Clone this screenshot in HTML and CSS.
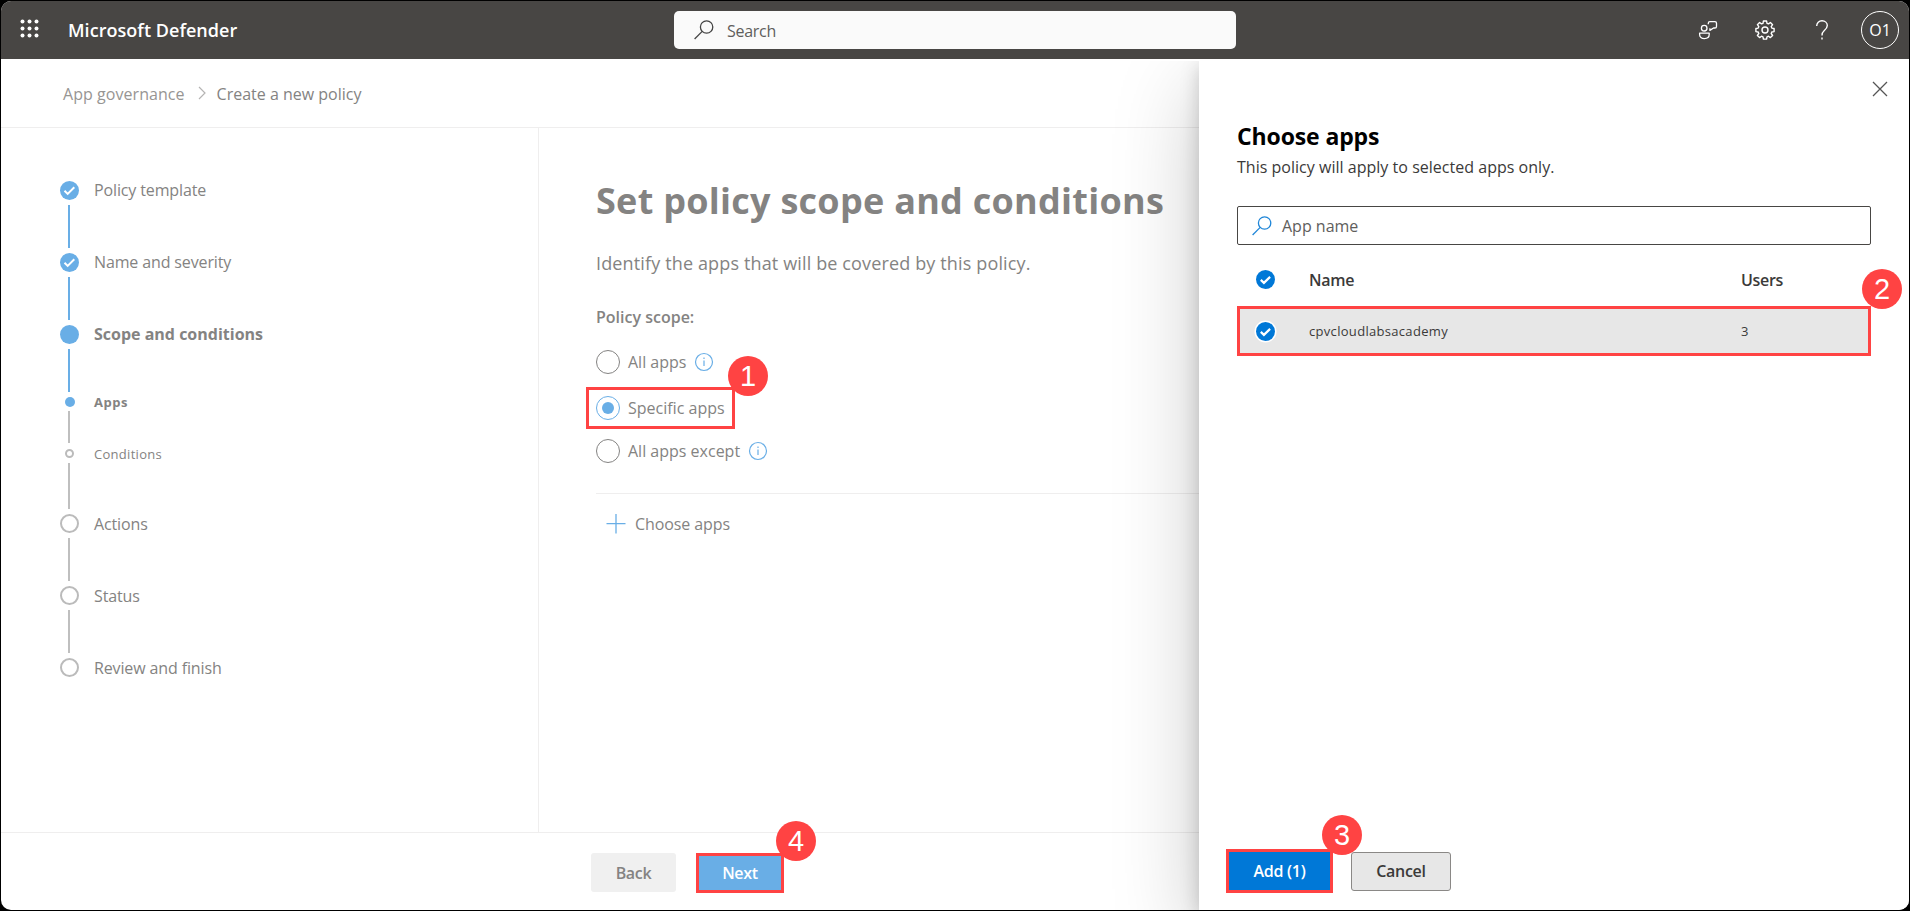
FILE: index.html
```html
<!DOCTYPE html>
<html lang="en">
<head>
<meta charset="utf-8">
<title>Create a new policy - Microsoft Defender</title>
<link rel="stylesheet" href="styles.css">
</head>
<body>
<div class="window">
  <header class="topbar">
    <svg class="waffle" width="20" height="20" viewBox="0 0 20 20" fill="#fff"><circle cx="2.5" cy="2.5" r="2"/><circle cx="9.5" cy="2.5" r="2"/><circle cx="16.5" cy="2.5" r="2"/><circle cx="2.5" cy="9.5" r="2"/><circle cx="9.5" cy="9.5" r="2"/><circle cx="16.5" cy="9.5" r="2"/><circle cx="2.5" cy="16.5" r="2"/><circle cx="9.5" cy="16.5" r="2"/><circle cx="16.5" cy="16.5" r="2"/></svg>
    <span class="brand">Microsoft Defender</span>
    <div class="search">
      <svg width="20" height="20" viewBox="0 0 20 20" fill="none" stroke="#444" stroke-width="1.3"><circle cx="12.6" cy="7" r="6.2"/><path d="M8.2 11.4L.6 19"/></svg>
      <span>Search</span>
    </div>
    <div class="tools">
      <svg class="feedback" width="20" height="20" viewBox="0 0 20 20" fill="none" stroke="#fff" stroke-width="1.3" stroke-linejoin="round"><circle cx="6.2" cy="8.2" r="2.8"/><path d="M1.6 13.2h9.6v1.400c0 2.600-2 4-4.800 4s-4.800-1.400-4.800-4z"/><path d="M10.300 4.200V3.200c0-1 .6-1.600 1.600-1.600h5c1 0 1.600.6 1.600 1.600v3.200c0 1-.6 1.600-1.600 1.600h-1.400l-3.600 2.400V8.200"/></svg>
      <svg class="gear" width="20" height="20" viewBox="0 0 20 20" fill="none" stroke="#fff" stroke-width="1.4" stroke-linejoin="round"><circle cx="10" cy="10" r="3"/><path d="M8.4 1h3.2l.4 2.3 1.5.6 1.9-1.4 2.2 2.2-1.4 1.9.6 1.5 2.3.4v3.1l-2.3.4-.6 1.5 1.4 1.9-2.2 2.2-1.9-1.4-1.5.6-.4 2.3H8.4l-.4-2.3-1.5-.6-1.9 1.4-2.2-2.2 1.4-1.9-.6-1.5L.9 11.6V8.5l2.3-.4.6-1.5-1.4-1.9 2.2-2.2 1.9 1.4L8 3.3z"/></svg>
      <svg class="help" width="14" height="20" viewBox="0 0 14 20" fill="none" stroke="#fff" stroke-width="1.4"><path d="M1.7 6C1.7 2.8 4 .8 7 .8s5.3 2 5.3 4.8c0 2.6-1.5 3.7-3.2 5.1C7.7 11.9 7 12.8 7 15.4M7 17.4v2"/></svg>
      <span class="avatar">O1</span>
    </div>
  </header>
  <div class="page">
    <nav class="crumbs"><span class="parent">App governance</span><svg width="8" height="14" viewBox="0 0 8 14" fill="none" stroke="#b5b4b3" stroke-width="1.2"><path d="M1 1l6 6-6 6"/></svg><span>Create a new policy</span></nav>
    <div class="wizard">
      <aside class="steps">
        <div class="step"><i class="dot full"><svg width="19" height="19" viewBox="0 0 19 19" fill="none" stroke="#fff" stroke-width="2"><path d="M4.5 9.7l3.2 3.2 6.6-6.6"/></svg></i><span>Policy template</span></div>
        <div class="line blue"></div>
        <div class="step"><i class="dot full"><svg width="19" height="19" viewBox="0 0 19 19" fill="none" stroke="#fff" stroke-width="2"><path d="M4.5 9.7l3.2 3.2 6.6-6.6"/></svg></i><span>Name and severity</span></div>
        <div class="line blue"></div>
        <div class="step current"><i class="dot full"></i><span>Scope and conditions</span></div>
        <div class="line blue"></div>
        <div class="step sub apps"><i class="dot full"></i><span>Apps</span></div>
        <div class="line after-apps"></div>
        <div class="step sub conditions"><i class="dot"></i><span>Conditions</span></div>
        <div class="line after-conditions"></div>
        <div class="step later"><i class="dot"></i><span>Actions</span></div>
        <div class="line"></div>
        <div class="step later"><i class="dot"></i><span>Status</span></div>
        <div class="line"></div>
        <div class="step later"><i class="dot"></i><span>Review and finish</span></div>
      </aside>
      <main class="content">
        <h1>Set policy scope and conditions</h1>
        <p class="intro">Identify the apps that will be covered by this policy.</p>
        <div class="label">Policy scope:</div>
        <div class="option"><i class="radio"></i><span>All apps</span><svg class="info" width="20" height="20" viewBox="0 0 20 20" fill="none" stroke="#69aee6" stroke-width="1.2"><circle cx="10" cy="10" r="8.5"/><path d="M10 8.5v5.5M10 5.6v1.5"/></svg></div>
        <div class="option picked mark"><i class="radio on"></i><span>Specific apps</span><b class="badge b1">1</b></div>
        <div class="option"><i class="radio"></i><span>All apps except</span><svg class="info" width="20" height="20" viewBox="0 0 20 20" fill="none" stroke="#69aee6" stroke-width="1.2"><circle cx="10" cy="10" r="8.5"/><path d="M10 8.5v5.5M10 5.6v1.5"/></svg></div>
        <div class="choose"><svg width="20" height="20" viewBox="0 0 20 20" stroke="#69aee6" stroke-width="1.3"><path d="M.5 9.7h19M10 0v19.5"/></svg><span>Choose apps</span></div>
      </main>
    </div>
    <footer class="actions">
      <button class="btn back">Back</button>
      <button class="btn next mark">Next<b class="badge b4">4</b></button>
    </footer>
  </div>
  <section class="panel">
    <svg class="close" width="16" height="16" viewBox="0 0 16 16" fill="none" stroke="#555" stroke-width="1.3"><path d="M1 1l14 14M15 1L1 15"/></svg>
    <h2>Choose apps</h2>
    <p class="note">This policy will apply to selected apps only.</p>
    <div class="field"><svg width="20" height="20" viewBox="0 0 20 20" fill="none" stroke="#1f86d8" stroke-width="1.3"><circle cx="12.6" cy="7" r="6.2"/><path d="M8.2 11.4L.6 19"/></svg><span>App name</span></div>
    <div class="row head"><i class="check"><svg width="19" height="19" viewBox="0 0 19 19" fill="none" stroke="#fff" stroke-width="2.2"><path d="M4.8 9.9l3.1 3 6.2-6"/></svg></i><span class="name">Name</span><span>Users</span></div>
    <div class="row item mark"><i class="check"><svg width="19" height="19" viewBox="0 0 19 19" fill="none" stroke="#fff" stroke-width="2.2"><path d="M4.8 9.9l3.1 3 6.2-6"/></svg></i><span class="name">cpvcloudlabsacademy</span><span>3</span><b class="badge b2">2</b></div>
    <div class="panel-actions">
      <button class="btn add mark">Add (1)<b class="badge b3">3</b></button>
      <button class="btn cancel">Cancel</button>
    </div>
  </section>
</div>
</body>
</html>
```
FILE: styles.css
```css
* { box-sizing: border-box; }
body { margin: 0; background: #000; font-family: "Open Sans", "Noto Sans", sans-serif; font-size: 16px; color: #3b3a39; overflow: hidden; }
h1, h2, p { margin: 0; white-space: nowrap; }
i, b { font-style: normal; font-weight: 400; }
svg { flex: none; display: block; }
span { white-space: nowrap; }
.window { position: relative; width: 1908px; height: 909px; margin: 1px; background: #fff; border-radius: 10px; overflow: hidden; display: flex; flex-direction: column; }
.topbar { height: 58px; flex: none; background: #484644; color: #fff; display: flex; align-items: center; }
.waffle { margin: -2px 0 0 19px; }
.brand { width: 606px; margin-left: 28px; font-size: 18px; font-weight: 600; letter-spacing: .04px; }
.search { width: 562px; height: 38px; background: #fafafa; border-radius: 5px; display: flex; align-items: center; gap: 14px; padding-left: 20px; color: #605e5c; letter-spacing: -.28px; }
.search svg { margin-top: -1px; }
.search span { padding-top: 1px; margin-left: -1px; }
.tools { flex: 1; display: flex; align-items: center; justify-content: flex-end; padding-right: 10px; }
.feedback { margin-right: 37px; }
.gear { margin-right: 40px; }
.help { margin-right: 32px; }
.avatar { width: 38px; height: 38px; border: 1.5px solid #fff; border-radius: 50%; font-size: 16px; line-height: 37px; text-align: center; }
.page { flex: 1; display: flex; flex-direction: column; color: #848382; min-height: 0; }
.crumbs { height: 69px; flex: none; border-bottom: 1px solid #efeeee; display: flex; align-items: center; padding: 0 0 0 62px; }
.crumbs span { padding-top: 2px; }
.crumbs svg { margin: 0 11px 0 13px; }
.parent { color: #979593; letter-spacing: .05px; }
.wizard { flex: 1; display: flex; min-height: 0; }
.steps { width: 538px; border-right: 1px solid #efeeee; padding: 48px 0 0 59px; letter-spacing: -.13px; }
.step { height: 29px; display: flex; align-items: center; gap: 15px; }
.step span { margin-top: -1px; }
.step.later span { margin-top: 1px; }
.dot { width: 19px; height: 19px; border: 2px solid #bbb; border-radius: 50%; flex: none; }
.dot.full { border: 0; background: #69aee6; }
.line { width: 2px; height: 43px; margin-left: 8px; background: #bfbfbf; }
.line.blue { background: #69aee6; }
.line.after-apps { height: 32px; }
.line.after-conditions { height: 46px; }
.current { font-weight: 700; letter-spacing: 0; }
.sub { height: 19px; font-size: 13px; gap: 19px; padding-left: 5px; letter-spacing: .29px; }
.apps { font-weight: 700; letter-spacing: .53px; }
.step.apps span { margin-top: 1px; }
.sub .dot { width: 10px; height: 10px; }
.conditions { height: 20px; gap: 20px; }
.step.conditions span { margin-top: 1px; }
.conditions .dot { width: 9px; height: 9px; }
.content { flex: 1; padding-left: 57px; }
h1 { font-size: 36px; line-height: 50px; font-weight: 700; margin-top: 48px; letter-spacing: .27px; }
.intro { font-size: 18px; line-height: 26px; margin-top: 24px; letter-spacing: .14px; }
.label { font-weight: 550; line-height: 24px; margin: 29px 0 12px; }
.option { display: flex; align-items: center; height: 42px; margin-bottom: 4px; }
.radio { width: 24px; height: 24px; border: 1px solid #848382; border-radius: 50%; margin-right: 8px; }
.radio.on { border-color: #69aee6; padding: 5px; }
.radio.on::before { content: ""; display: block; width: 12px; height: 12px; border-radius: 50%; background: #69aee6; }
.info { margin-left: 8px; }
.mark { position: relative; border: 3px solid #ff4343; }
.option.picked { width: 149px; margin-left: -10px; padding-left: 7px; margin-bottom: 1px; }
.picked .radio, .picked span { margin-top: -1px; }
.badge { position: absolute; width: 40px; height: 40px; border-radius: 50%; background: #ff4343; color: #fff; font: 400 29px/40px "Liberation Sans", Arial, sans-serif; text-align: center; letter-spacing: 0; }
.choose { border-top: 1px solid #efeeee; margin-top: 21px; padding: 19px 0 0 10px; display: flex; gap: 9px; align-items: center; letter-spacing: -.09px; }
.choose svg { margin-top: -1px; }
.actions { height: 78px; flex: none; border-top: 1px solid #efeeee; display: flex; gap: 20px; padding: 20px 0 0 590px; }
.btn { font: 550 16px/20px "Open Sans", "Noto Sans", sans-serif; padding: 0; border: 0; border-radius: 3px; letter-spacing: -.3px; }
.back { width: 85px; height: 39px; background: #f0f0f0; color: #848382; }
.btn.mark { border: 3px solid #ff4343; border-radius: 0; color: #fff; font-weight: 650; }
.next { width: 88px; height: 40px; background: #69aee6; }
.panel { position: absolute; left: 1198px; top: 60px; right: 0; bottom: 0; background: #fff; box-shadow: 0 26px 80px rgba(0,0,0,.22), 0 5px 18px rgba(0,0,0,.18); clip-path: inset(0 0 0 -110px); display: flex; flex-direction: column; padding: 0 38px; }
.close { align-self: flex-end; margin: 20px -17px 0 0; }
h2 { font-size: 23px; line-height: 30px; font-weight: 700; color: #000; margin-top: 24px; letter-spacing: -.12px; }
.note { line-height: 24px; margin-top: 4px; letter-spacing: .02px; }
.field { height: 39px; border: 1px solid #484644; border-radius: 2px; margin-top: 27px; display: flex; align-items: center; padding-left: 14px; gap: 10px; color: #605e5c; }
.row { display: flex; align-items: center; padding-left: 19px; }
.check { width: 19px; height: 19px; border-radius: 50%; background: #0078d7; flex: none; }
.name { width: 432px; margin-left: 34px; }
.head { height: 61px; padding-top: 7px; font-weight: 550; letter-spacing: -.3px; }
.head span { padding-top: 1px; }
.item { height: 50px; padding-left: 16px; background: #e7e7e7; font-size: 13px; letter-spacing: .31px; }
.item .check { box-shadow: 0 0 0 1.5px #fff; }
.panel-actions { margin: auto 0 17px -11px; display: flex; gap: 18px; align-items: center; }
.add { width: 107px; height: 44px; background: #0078d7; }
.cancel { width: 100px; height: 39px; background: #e7e7e7; border: 1px solid #8a8886; color: #3b3a39; }
.b1 { left: 139px; top: -34px; }
.b2 { right: -34px; top: -40px; }
.b3 { left: 93px; top: -37px; }
.b4 { left: 77px; top: -35px; }
```
